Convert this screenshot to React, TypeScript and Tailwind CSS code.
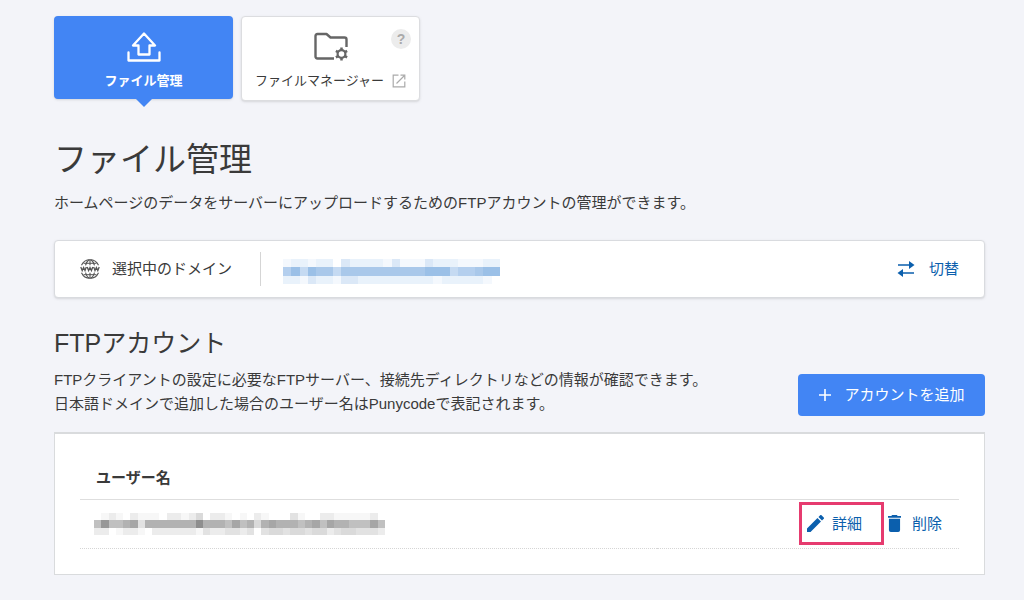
import { useState } from 'react'

// 伏せ字のモザイク。1文字が1マス、0が白で数字が大きいほど濃い
const DOMAIN_MOSAIC = [
  '12212203222213111322211122',
  '57476646666666666777455677',
  '22132213322222222212222210',
]

const USER_MOSAIC = [
  '0121021110221240221010210003100221111120',
  '5855673666666696665756467666567576655575',
  '2201221022222213223323034434434423443332',
]

const BLUES = ['#ffffff', '#f4f8fd', '#e9f2fb', '#dbe8f7', '#c5daf2', '#b4cfee', '#a9c8ea', '#9bc0e7', '#82b1e2', '#6fa2da']
const GRAYS = ['#ffffff', '#f7f7f7', '#ececec', '#e2e2e2', '#dadada', '#c0c0c0', '#b2b2b2', '#a6a6a6', '#989898', '#8e8e8e']

interface MosaicProps {
  rows: string[]
  colors: string[]
  className: string
}

function Mosaic({ rows, colors, className }: MosaicProps) {
  return (
    <svg
      className={className}
      viewBox={`0 0 ${rows[0].length} ${rows.length}`}
      preserveAspectRatio="none"
      shapeRendering="crispEdges"
      aria-hidden="true"
    >
      {rows.map((row, y) =>
        row.split('').map((level, x) => (
          <rect key={`${x}-${y}`} x={x} y={y} width={1} height={1} fill={colors[Number(level)]} />
        ))
      )}
    </svg>
  )
}

function UploadIcon() {
  return (
    <svg className="w-[34px] h-[30px]" viewBox="0 0 34 30" fill="none" stroke="currentColor" strokeWidth={2.3} strokeLinejoin="round" strokeLinecap="round">
      <path d="M17 1.5L28 13.5H22.5V22.5H11.5V13.5H6Z" />
      <path d="M1.5 20.5V28.5H32.5V20.5" />
    </svg>
  )
}

function FolderIcon() {
  return (
    <svg className="w-[36px] h-[30px]" viewBox="0 0 36 30" fill="none" stroke="currentColor" strokeWidth={2.4}>
      <path d="M21 26.5H4.5Q2.500 26.500 2.500 24.500V4Q2.500 2 4.500 2H13.500L17.500 5.500H31.500Q33.500 5.500 33.500 7.500V15" strokeLinejoin="round" />
      <circle cx={28.5} cy={22} r={3.9} strokeWidth={2.2} />
      <path
        d="M28.500 15.500V18.500M28.500 25.500V28.500M22.900 18.800L25.500 20.300M31.500 23.800L34.100 25.300M34.100 18.800L31.500 20.300M25.500 23.800L22.900 25.300"
        strokeWidth={2.5}
      />
    </svg>
  )
}

function ExternalIcon() {
  return (
    <svg className="w-[14px] h-[14px] text-[#aaa]" viewBox="0 0 14 14" fill="none" stroke="currentColor" strokeWidth={1.2}>
      <path d="M6.500 1.200H1.200V12.800H12.800V7.500" />
      <path d="M4.500 9.500L12 2M8.500 1.200H12.800V5.500" />
    </svg>
  )
}

function WwwIcon() {
  return (
    <svg className="w-5 h-[22px] text-[#555]" viewBox="0 0 20 22" fill="none" stroke="currentColor" strokeWidth={1.1}>
      <path d="M1.500 7.300A9.300 9.300 0 0 1 18.500 7.300M1.500 14.700A9.300 9.300 0 0 0 18.500 14.700" />
      <path d="M10 1.500V7.300M10 14.700V20.500M5.500 7.300Q6.500 3.500 9 1.700M14.500 7.300Q13.500 3.500 11 1.700M5.500 14.700Q6.500 18.500 9 20.300M14.500 14.700Q13.500 18.500 11 20.300" />
      <path d="M3.500 5.300H16.500M3.500 16.700H16.500" strokeWidth={1} />
      <path d="M0.800 9L2.200 12.600L3.600 9.600L5 12.600L6.300 9M7.200 9L8.600 12.600L10 9.600L11.400 12.600L12.800 9M13.700 9L15 12.600L16.400 9.600L17.800 12.600L19.200 9" strokeWidth={1.3} />
    </svg>
  )
}

function SwapIcon() {
  return (
    <svg className="w-[18px] h-4" viewBox="0 0 18 16">
      <path d="M1 4H12M6 12H17" stroke="currentColor" strokeWidth={1.7} />
      <path d="M12 0L17.500 4L12 8ZM6 8L0.500 12L6 16Z" fill="currentColor" />
    </svg>
  )
}

function PencilIcon() {
  return (
    <svg className="w-[17px] h-[17px]" viewBox="3 3 18 18" fill="currentColor">
      <path d="M3 17.250V21h3.750L17.810 9.940l-3.750-3.750L3 17.250zM20.710 7.040a1 1 0 0 0 0-1.410l-2.340-2.340a1 1 0 0 0-1.410 0l-1.830 1.830 3.750 3.750 1.830-1.830z" />
    </svg>
  )
}

function TrashIcon() {
  return (
    <svg className="w-[13px] h-[17px]" viewBox="5 3 14 18" preserveAspectRatio="none" fill="currentColor">
      <path d="M6 19a2 2 0 0 0 2 2h8a2 2 0 0 0 2-2V7H6v12zM19 4h-3.500l-1-1h-5l-1 1H5v2h14V4z" />
    </svg>
  )
}

const accounts = [{ id: 'ftp-1', mosaic: USER_MOSAIC }]

export default function App() {
  const [tab, setTab] = useState('files')

  return (
    <div className="min-h-screen bg-[#f3f4f9] pt-4 pb-6 pl-[54px] pr-[39px] text-[15px] leading-6 text-[#3a3a3a] font-['Liberation_Sans','Noto_Sans_CJK_JP',sans-serif]">
      <nav className="flex gap-2">
        <button
          type="button"
          onClick={() => setTab('files')}
          aria-pressed={tab === 'files'}
          className="relative flex h-[83px] w-[179px] flex-col items-center rounded bg-[#4285f4] pt-4 text-[13px] font-bold leading-6 text-white shadow-sm"
        >
          <UploadIcon />
          <span className="mt-[7px]">ファイル管理</span>
          {tab === 'files' && (
            <span className="absolute top-full left-1/2 -translate-x-1/2 border-x-8 border-t-8 border-x-transparent border-t-[#4285f4]" />
          )}
        </button>
        <a
          href="#"
          className="relative flex h-[85px] w-[179px] flex-col items-center rounded border border-[#dcdde0] bg-white pt-[15px] text-[13px] leading-6 shadow"
        >
          <span className="text-[#666]">
            <FolderIcon />
          </span>
          <span className="mt-[7px] flex items-center gap-2">
            ファイルマネージャー
            <ExternalIcon />
          </span>
          <span className="absolute top-3 right-2 h-5 w-5 rounded-full bg-[#ececec] text-center text-sm font-bold text-[#aaa]">?</span>
        </a>
      </nav>

      <h1 className="mt-[35px] text-[33px] leading-[48px]">ファイル管理</h1>
      <p className="mt-[7px]">ホームページのデータをサーバーにアップロードするためのFTPアカウントの管理ができます。</p>

      <section className="mt-[25px] flex h-[58px] items-center rounded border border-[#d9dbdf] bg-white px-[25px] shadow">
        <WwwIcon />
        <span className="ml-3">選択中のドメイン</span>
        <div className="ml-7 h-[34px] border-l border-[#d5d5d5]" />
        <Mosaic rows={DOMAIN_MOSAIC} colors={BLUES} className="mt-1 ml-[22px] h-[25px] w-[217px]" />
        <button type="button" className="ml-auto flex items-center gap-[14px] text-[#0b5fad]">
          <SwapIcon />
          切替
        </button>
      </section>

      <h2 className="mt-[25px] text-[25px] leading-10">FTPアカウント</h2>
      <div className="mt-[5px] flex items-end justify-between">
        <p>
          FTPクライアントの設定に必要なFTPサーバー、接続先ディレクトリなどの情報が確認できます。
          <br />
          日本語ドメインで追加した場合のユーザー名はPunycodeで表記されます。
        </p>
        <button type="button" className="flex h-[42px] w-[187px] shrink-0 items-center justify-center gap-3 rounded bg-[#4285f4] text-white">
          <svg className="w-[14px] h-[14px]" viewBox="0 0 14 14" stroke="currentColor" strokeWidth={1.6}>
            <path d="M7 1V13M1 7H13" />
          </svg>
          アカウントを追加
        </button>
      </div>

      <div className="mt-4 border border-t-2 border-[#d9dbdd] bg-white px-[25px] pt-[23px] pb-[25px]">
        <table className="w-full border-collapse">
          <thead>
            <tr className="h-[42px] border-b border-[#dedede]">
              <th className="pl-4 text-left font-bold">ユーザー名</th>
              <th aria-label="操作" />
            </tr>
          </thead>
          <tbody>
            {accounts.map((account) => (
              <tr key={account.id} className="h-[49px] border-b border-dotted border-[#d5d5d5]">
                <td className="pl-[14px]">
                  <Mosaic rows={account.mosaic} colors={GRAYS} className="h-[22px] w-[291px]" />
                </td>
                <td>
                  <div className="flex items-center justify-end gap-1 pr-[17px] text-[#0b5fad]">
                    <button type="button" className="flex h-[43px] w-[85px] items-center gap-2 border-[3px] border-[#e63b6f] pl-[5px]">
                      <PencilIcon />
                      詳細
                    </button>
                    <button type="button" className="flex items-center gap-[11px]">
                      <TrashIcon />
                      削除
                    </button>
                  </div>
                </td>
              </tr>
            ))}
          </tbody>
        </table>
      </div>
    </div>
  )
}
